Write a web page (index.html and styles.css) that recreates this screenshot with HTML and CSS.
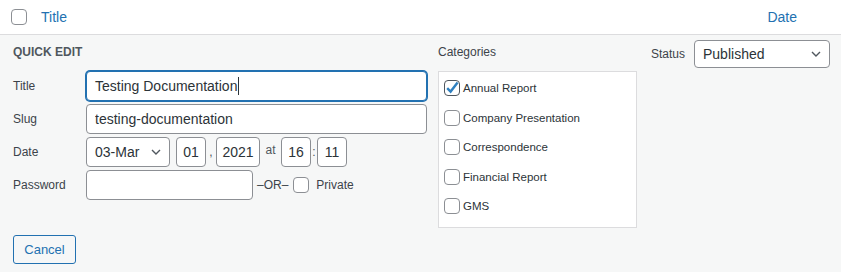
FILE: index.html
```html
<!DOCTYPE html>
<html lang="en">
<head>
  <meta charset="UTF-8">
  <meta name="viewport" content="width=device-width, initial-scale=1.0">
  <title>Quick Edit</title>
  <link rel="stylesheet" href="styles.css">
</head>
<body>
  <div class="list-header">
    <span class="checkbox"></span>
    <a class="col-title" href="#">Title</a>
    <a class="col-date" href="#">Date</a>
  </div>

  <div class="quick-edit">
    <div class="qe-columns">
      <!-- left: main fields -->
      <div class="col-left">
        <h4 class="legend">Quick Edit</h4>
        <div class="field-row">
          <label>Title</label>
          <div class="text-input focused">Testing Documentation<span class="caret"></span></div>
        </div>
        <div class="field-row">
          <label>Slug</label>
          <input class="text-input" type="text" value="testing-documentation">
        </div>
        <div class="field-row">
          <label>Date</label>
          <div class="select date-month">
            <span>03-Mar</span>
            <svg width="10" height="6" viewBox="0 0 10 6"><polyline points="1,1 5,5 9,1" fill="none" stroke="#50575e" stroke-width="1.4"/></svg>
          </div>
          <input class="text-input small" type="text" value="01">
          <span class="sep comma">,</span>
          <input class="text-input year" type="text" value="2021">
          <span class="sep at">at</span>
          <input class="text-input small" type="text" value="16">
          <span class="sep colon">:</span>
          <input class="text-input small" type="text" value="11">
        </div>
        <div class="field-row">
          <label>Password</label>
          <input class="text-input pass" type="text" value="">
          <span class="or">&ndash;OR&ndash;</span>
          <span class="checkbox"></span>
          <span class="private">Private</span>
        </div>
      </div>

      <!-- middle: categories -->
      <div class="col-cats">
        <div class="cats-label">Categories</div>
        <ul class="cat-box">
          <li class="cat-item">
            <svg class="checked" width="16" height="16" viewBox="0 0 16 16">
              <rect x="0.5" y="0.5" width="15" height="15" rx="3.5" fill="#fff" stroke="#50575e"/>
              <path d="M3.2 8.2 L6.6 11.6 L13.6 2.6" fill="none" stroke="#2f80c0" stroke-width="2.4"/>
            </svg>
            Annual Report
          </li>
          <li class="cat-item"><span class="checkbox"></span>Company Presentation</li>
          <li class="cat-item"><span class="checkbox"></span>Correspondence</li>
          <li class="cat-item"><span class="checkbox"></span>Financial Report</li>
          <li class="cat-item"><span class="checkbox"></span>GMS</li>
          <li class="cat-item"><span class="checkbox"></span></li>
        </ul>
      </div>

      <!-- right: status -->
      <div class="col-status">
        <span class="status-label">Status</span>
        <div class="select status-select">
          <span>Published</span>
          <svg width="10" height="6" viewBox="0 0 10 6"><polyline points="1,1 5,5 9,1" fill="none" stroke="#50575e" stroke-width="1.4"/></svg>
        </div>
      </div>
    </div>

    <div class="qe-footer">
      <button class="cancel">Cancel</button>
    </div>
  </div>
</body>
</html>
```

FILE: styles.css
```css
:root {
  --link-color: #2271b1;
  --border-color: #8c8f94;
  --panel-bg: #f6f7f7;
  --text-color: #2c3338;
  --label-color: #3c434a;
}

body {
  margin: 0;
  font-family: "Liberation Sans", Arial, sans-serif;
  color: var(--label-color);
  background: var(--panel-bg);
}

/* table header row */
.list-header {
  display: flex;
  align-items: center;
  height: 34px;
  padding-left: 11px;
  background: #fff;
  border-bottom: 1px solid #dcdcde;
}

.col-title,
.col-date {
  font-size: 14px;
  color: var(--link-color);
  text-decoration: none;
}

.col-title {
  margin-left: 14px;
}

.col-date {
  margin-left: auto;
  margin-right: 44px;
}

.checkbox {
  box-sizing: border-box;
  display: inline-block;
  flex: none;
  width: 16px;
  height: 16px;
  border: 1px solid var(--border-color);
  border-radius: 4px;
  background: #fff;
}

/* quick edit panel */
.quick-edit {
  padding: 0 11px 8px 13px;
  background: var(--panel-bg);
}

.qe-columns {
  display: flex;
}

.col-left {
  width: 414px;
}

.legend,
.cats-label {
  margin: 9px 0 11px;
  font-size: 12px;
  line-height: 16px;
}

.legend {
  font-weight: bold;
  text-transform: uppercase;
  color: #50575e;
}

.field-row {
  display: flex;
  align-items: center;
  height: 30px;
  margin-bottom: 3px;
  font-size: 12px;
}

.field-row label {
  flex: none;
  width: 73px;
}

.text-input {
  box-sizing: border-box;
  flex: 1;
  min-width: 0;
  height: 30px;
  margin: 0;
  padding: 0 8px;
  border: 1px solid var(--border-color);
  border-radius: 4px;
  background: #fff;
  font: 14px "Liberation Sans", Arial, sans-serif;
  color: var(--text-color);
  outline: none;
}

.focused {
  display: flex;
  align-items: center;
  border-color: var(--link-color);
  box-shadow: 0 0 0 1px var(--link-color);
}

.caret {
  width: 1px;
  height: 18px;
  margin-left: 1px;
  background: var(--text-color);
}

.select {
  box-sizing: border-box;
  display: flex;
  align-items: center;
  justify-content: space-between;
  flex: none;
  height: 30px;
  padding: 0 8px;
  border: 1px solid var(--border-color);
  border-radius: 4px;
  background: #fff;
  font-size: 14px;
  color: var(--text-color);
}

.date-month {
  width: 84px;
  margin-right: 6px;
}

.text-input.small {
  flex: none;
  width: 30px;
  padding: 0;
  text-align: center;
}

.text-input.year {
  flex: none;
  width: 44px;
  padding: 0;
  text-align: center;
}

.sep {
  flex: none;
  text-align: center;
  color: #50575e;
}

.comma {
  width: 10px;
}

.at {
  width: 21px;
  align-self: flex-start;
  padding-top: 6px;
}

.colon {
  width: 6px;
}

.text-input.pass {
  flex: none;
  width: 167px;
}

.or {
  margin: 0 5px 0 4px;
}

.private {
  margin-left: 7px;
}

/* categories */
.col-cats {
  flex: none;
  width: 199px;
  margin-left: 11px;
}

.cat-box {
  box-sizing: border-box;
  height: 157px;
  margin: 0;
  padding: 1.5px 5px 0;
  list-style: none;
  overflow: hidden;
  border: 1px solid #dcdcde;
  background: #fff;
}

.cat-item {
  display: flex;
  align-items: center;
  gap: 3px;
  height: 29.5px;
  font-size: 11.5px;
  color: var(--text-color);
}

.checked {
  flex: none;
  overflow: visible;
}

/* status */
.col-status {
  display: flex;
  align-items: center;
  height: 28px;
  margin-top: 5px;
  margin-left: 14px;
}

.status-label {
  margin-right: 9px;
  font-size: 12px;
}

.status-select {
  width: 136px;
  height: 28px;
}

/* footer */
.qe-footer {
  padding-top: 7px;
}

.cancel {
  box-sizing: border-box;
  width: 63px;
  height: 29px;
  padding: 0;
  border: 1px solid var(--link-color);
  border-radius: 3px;
  background: var(--panel-bg);
  font: 13px "Liberation Sans", Arial, sans-serif;
  color: var(--link-color);
  cursor: pointer;
}
```
